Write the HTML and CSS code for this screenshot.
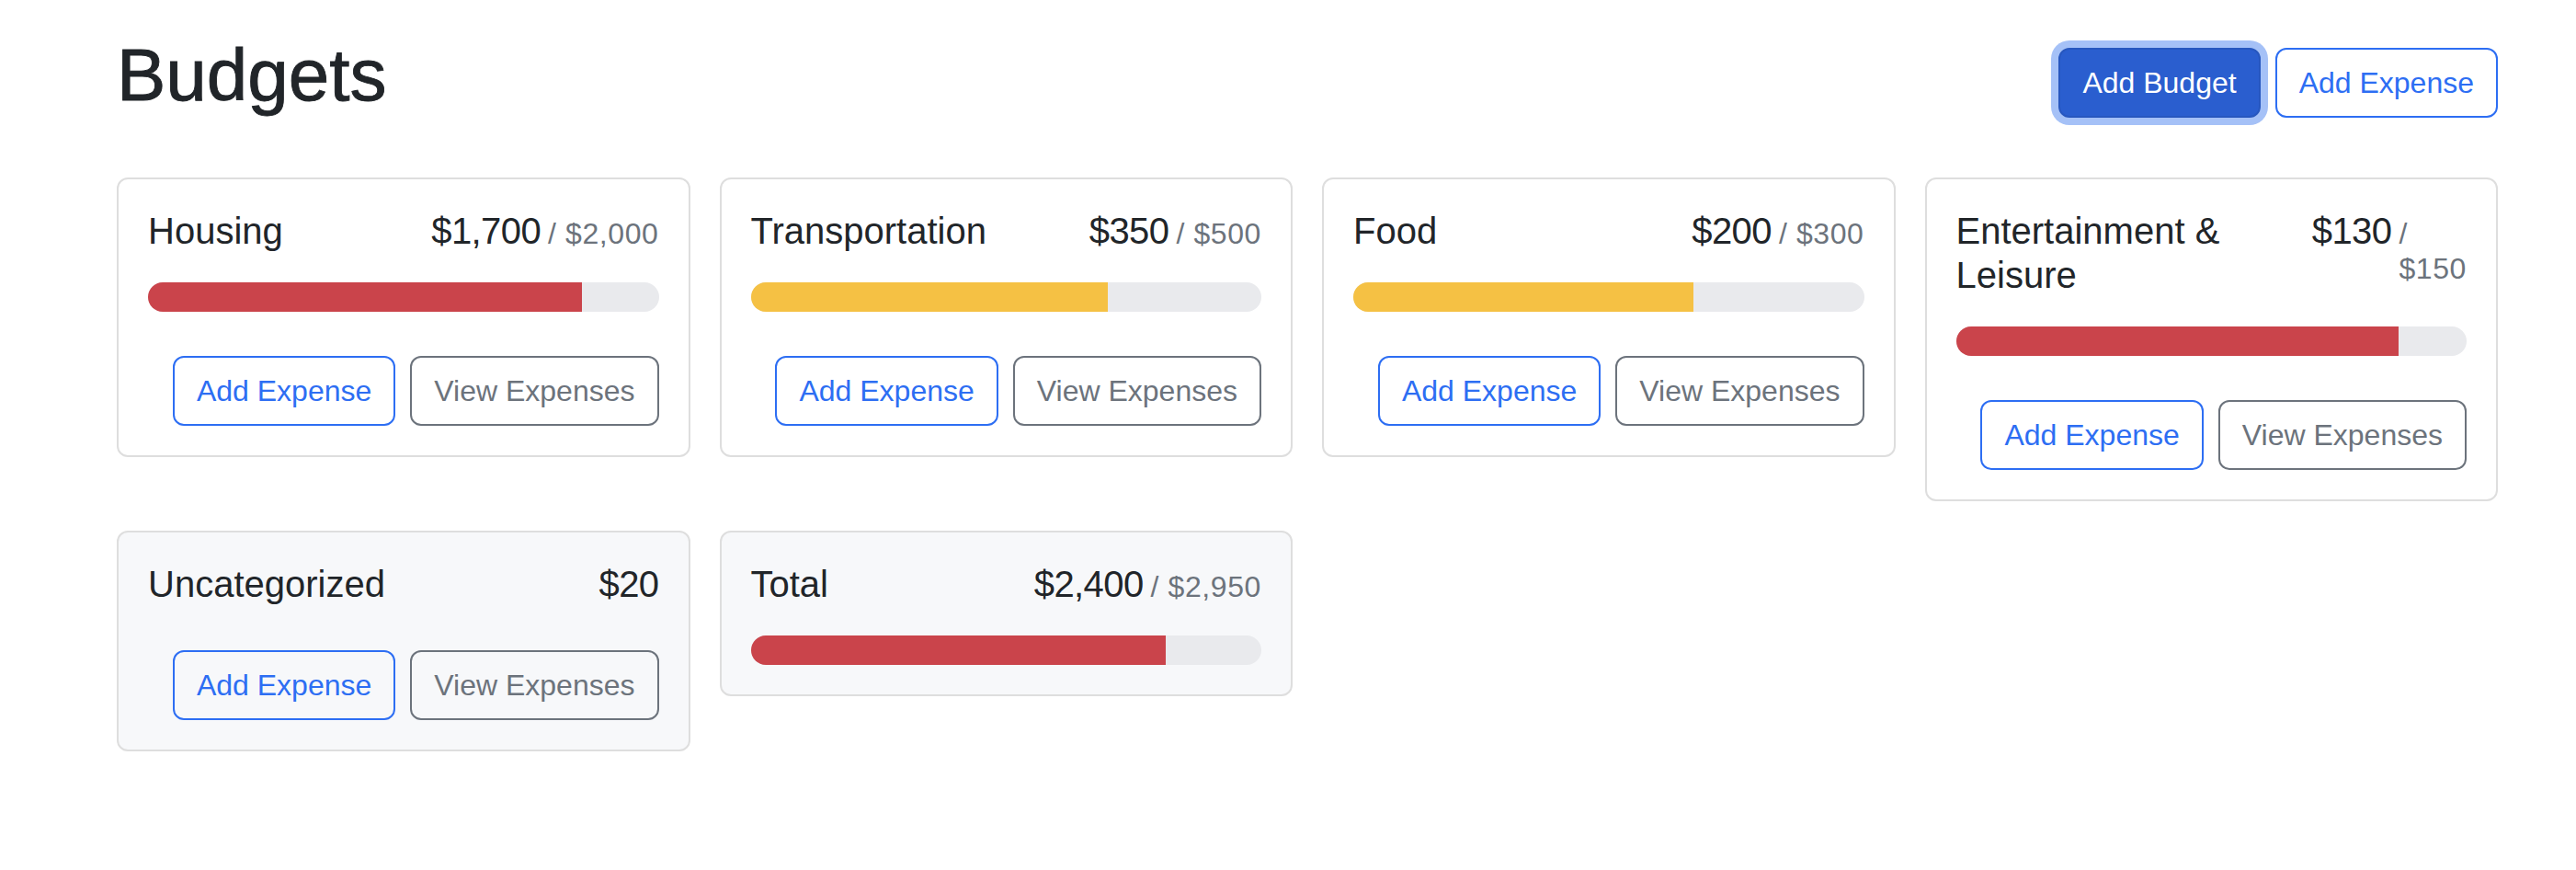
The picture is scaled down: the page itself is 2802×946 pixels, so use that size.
FILE: index.html
```html
<!DOCTYPE html>
<html lang="en">
<head>
<meta charset="utf-8">
<title>Budgets</title>
<link rel="stylesheet" href="styles.css">
</head>
<body>
<div class="page">
  <div class="header">
    <h1 class="page-title">Budgets</h1>
    <button class="btn btn-primary is-focused">Add Budget</button>
    <button class="btn btn-outline-primary">Add Expense</button>
  </div>
  <div class="grid">
    <div class="card">
      <div class="card-title">
        <div class="name">Housing</div>
        <div class="amount">$1,700<span class="max">/ $2,000</span></div>
      </div>
      <div class="progress"><div class="bar bar-danger" style="width:85%"></div></div>
      <div class="actions">
        <button class="btn btn-outline-primary">Add Expense</button>
        <button class="btn btn-outline-secondary">View Expenses</button>
      </div>
    </div>
    <div class="card">
      <div class="card-title">
        <div class="name">Transportation</div>
        <div class="amount">$350<span class="max">/ $500</span></div>
      </div>
      <div class="progress"><div class="bar bar-warning" style="width:70%"></div></div>
      <div class="actions">
        <button class="btn btn-outline-primary">Add Expense</button>
        <button class="btn btn-outline-secondary">View Expenses</button>
      </div>
    </div>
    <div class="card">
      <div class="card-title">
        <div class="name">Food</div>
        <div class="amount">$200<span class="max">/ $300</span></div>
      </div>
      <div class="progress"><div class="bar bar-warning" style="width:66.67%"></div></div>
      <div class="actions">
        <button class="btn btn-outline-primary">Add Expense</button>
        <button class="btn btn-outline-secondary">View Expenses</button>
      </div>
    </div>
    <div class="card">
      <div class="card-title">
        <div class="name">Entertainment &amp; Leisure</div>
        <div class="amount">$130<span class="max">/ $150</span></div>
      </div>
      <div class="progress"><div class="bar bar-danger" style="width:86.67%"></div></div>
      <div class="actions">
        <button class="btn btn-outline-primary">Add Expense</button>
        <button class="btn btn-outline-secondary">View Expenses</button>
      </div>
    </div>
    <div class="card card-light">
      <div class="card-title">
        <div class="name">Uncategorized</div>
        <div class="amount">$20</div>
      </div>
      <div class="actions">
        <button class="btn btn-outline-primary">Add Expense</button>
        <button class="btn btn-outline-secondary">View Expenses</button>
      </div>
    </div>
    <div class="card card-light">
      <div class="card-title">
        <div class="name">Total</div>
        <div class="amount">$2,400<span class="max">/ $2,950</span></div>
      </div>
      <div class="progress"><div class="bar bar-danger" style="width:81.36%"></div></div>
    </div>
  </div>
</div>
</body>
</html>
```
FILE: styles.css
```css
html, body {
  margin: 0;
  padding: 0;
  background: #ffffff;
}

body {
  font-family: "Liberation Sans", Arial, Helvetica, sans-serif;
  color: #212529;
  font-size: 32px;
  line-height: 1.5;
}

.page {
  width: 2590px;
  padding: 34px 0 0 127px;
}

.header {
  display: flex;
  align-items: center;
  gap: 16px;
  margin-bottom: 47px;
}

.page-title {
  margin: 0 auto 16px 0;
  font-size: 80px;
  font-weight: 500;
  line-height: 1.2;
  -webkit-text-stroke: 0.9px #212529;
}

.btn {
  font-family: inherit;
  font-size: 32px;
  line-height: 48px;
  padding: 12px 24px;
  border: 2px solid transparent;
  border-radius: 12px;
  background: transparent;
  cursor: pointer;
  white-space: nowrap;
}

.btn-primary {
  background: #2a5ecf;
  border-color: #2757bf;
  color: #ffffff;
}

.is-focused {
  box-shadow: 0 0 0 8px #a5c1f7;
}

.btn-outline-primary {
  color: #2d6ef3;
  border-color: #2d6ef3;
}

.btn-outline-secondary {
  color: #6c737c;
  border-color: #6c737c;
}

.grid {
  display: grid;
  grid-template-columns: repeat(4, 1fr);
  gap: 32px;
  align-items: start;
}

.card {
  border: 2px solid #dedede;
  border-radius: 12px;
  background: #ffffff;
  padding: 32px;
}

.card-light {
  background: #f7f8fa;
}

.card-title {
  display: flex;
  justify-content: space-between;
  align-items: baseline;
  font-size: 40px;
  line-height: 1.2;
  margin-bottom: 32px;
}

.name {
  margin-right: 16px;
}

.amount {
  display: flex;
  align-items: baseline;
  letter-spacing: -0.6px;
}

.max {
  font-size: 32px;
  color: #6c737c;
  margin-left: 8px;
  letter-spacing: 0.6px;
}

.progress {
  display: flex;
  height: 32px;
  border-radius: 1000px;
  background: #e9eaed;
  overflow: hidden;
}

.bar {
  height: 100%;
}

.bar-danger {
  background: #ca444b;
}

.bar-warning {
  background: #f5c144;
}

.actions {
  display: flex;
  justify-content: flex-end;
  gap: 16px;
  margin-top: 48px;
}
```
